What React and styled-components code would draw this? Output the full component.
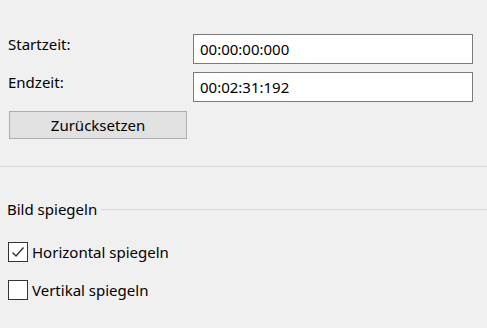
import React from "react";
import styled, { createGlobalStyle } from "styled-components";

const GlobalStyle = createGlobalStyle`
  html, body {
    margin: 0;
    padding: 0;
    background: #f0f0f0;
  }
  body {
    font-family: "Noto Sans", "Open Sans", sans-serif;
    font-size: 15px;
    color: #000;
  }
`;

const Page = styled.div`
  width: 487px;
  height: 328px;
  padding-top: 34px;
  box-sizing: border-box;
  overflow: hidden;
`;

const Form = styled.div`
  display: grid;
  grid-template-columns: 185px 280px;
  row-gap: 8px;
  padding-left: 8px;
`;

const Label = styled.div`
  line-height: 18px;
  padding-top: 1px;
`;

const TimeField = styled.input`
  box-sizing: border-box;
  width: 280px;
  height: 30px;
  margin: 0;
  border: 1px solid #7a7a7a;
  background: #fff;
  padding: 0 6px;
  font-family: inherit;
  font-size: 15px;
  color: #000;
  outline: none;
`;

const ResetButton = styled.button`
  box-sizing: border-box;
  display: block;
  width: 178px;
  height: 28px;
  margin: 9px 0 0 9px;
  border: 1px solid #adadad;
  background: #e1e1e1;
  font-family: inherit;
  font-size: 15px;
  color: #000;
  padding: 0;
`;

const Divider = styled.div`
  height: 1px;
  background: #d9d9d9;
  margin-top: 27px;
`;

const GroupHeader = styled.div`
  display: flex;
  align-items: center;
  margin-top: 32px;
  padding-left: 7px;
  height: 20px;
  line-height: 20px;
  &::after {
    content: "";
    flex: 1;
    height: 1px;
    background: #d9d9d9;
    margin-left: 4px;
  }
`;

const OptionList = styled.div`
  display: flex;
  flex-direction: column;
  gap: 18px;
  margin-top: 23px;
  padding-left: 8px;
`;

const Option = styled.label`
  display: flex;
  align-items: center;
  gap: 4px;
  height: 20px;
  line-height: 20px;
`;

const Box = styled.span`
  box-sizing: border-box;
  width: 20px;
  height: 20px;
  border: 1px solid #333;
  background: #fff;
  display: flex;
  align-items: center;
  justify-content: center;
`;

const CheckBox = ({ checked }) => (
  <Box>
    {checked && (
      <svg width="16" height="16" viewBox="0 0 16 16">
        <polyline
          points="2.5,8.5 6,12 13.5,3.5"
          fill="none"
          stroke="#333"
          strokeWidth="1.4"
        />
      </svg>
    )}
  </Box>
);

export default function App() {
  return (
    <Page>
      <GlobalStyle />
      <Form>
        <Label>Startzeit:</Label>
        <TimeField defaultValue="00:00:00:000" />
        <Label>Endzeit:</Label>
        <TimeField defaultValue="00:02:31:192" />
      </Form>
      <ResetButton>Zurücksetzen</ResetButton>
      <Divider />
      <GroupHeader>Bild spiegeln</GroupHeader>
      <OptionList>
        <Option>
          <CheckBox checked />
          Horizontal spiegeln
        </Option>
        <Option>
          <CheckBox />
          Vertikal spiegeln
        </Option>
      </OptionList>
    </Page>
  );
}
